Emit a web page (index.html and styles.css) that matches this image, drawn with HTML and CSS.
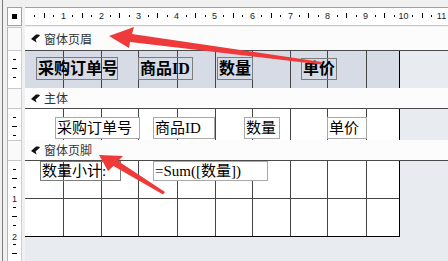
FILE: index.html
```html
<!DOCTYPE html>
<html lang="zh-CN">
<head>
<meta charset="utf-8">
<title>窗体设计视图</title>
<link rel="stylesheet" href="styles.css">
</head>
<body>
<div class="app">
  <div class="corner-cell"><div class="corner"><span class="corner-sq"></span></div></div>
  <div class="hruler-cell">
    <div class="hruler">
      <svg class="rsvg" width="423" height="17" viewBox="0 0 423 17">
        <g class="tk">
          <rect x="9" y="7" width="1" height="2"/><rect x="19" y="5" width="1" height="5"/><rect x="28" y="7" width="1" height="2"/>
          <rect x="47" y="7" width="1" height="2"/><rect x="57" y="5" width="1" height="5"/><rect x="66" y="7" width="1" height="2"/>
          <rect x="85" y="7" width="1" height="2"/><rect x="94" y="5" width="1" height="5"/><rect x="104" y="7" width="1" height="2"/>
          <rect x="123" y="7" width="1" height="2"/><rect x="132" y="5" width="1" height="5"/><rect x="142" y="7" width="1" height="2"/>
          <rect x="161" y="7" width="1" height="2"/><rect x="170" y="5" width="1" height="5"/><rect x="180" y="7" width="1" height="2"/>
          <rect x="198" y="7" width="1" height="2"/><rect x="208" y="5" width="1" height="5"/><rect x="217" y="7" width="1" height="2"/>
          <rect x="236" y="7" width="1" height="2"/><rect x="246" y="5" width="1" height="5"/><rect x="255" y="7" width="1" height="2"/>
          <rect x="274" y="7" width="1" height="2"/><rect x="283" y="5" width="1" height="5"/><rect x="293" y="7" width="1" height="2"/>
          <rect x="312" y="7" width="1" height="2"/><rect x="321" y="5" width="1" height="5"/><rect x="331" y="7" width="1" height="2"/>
          <rect x="350" y="7" width="1" height="2"/><rect x="359" y="5" width="1" height="5"/><rect x="369" y="7" width="1" height="2"/>
          <rect x="387" y="7" width="1" height="2"/><rect x="397" y="5" width="1" height="5"/><rect x="406" y="7" width="1" height="2"/>
        </g>
        <g class="num">
          <text x="38.5" y="11">1</text><text x="76.5" y="11">2</text><text x="113.5" y="11">3</text>
          <text x="151.5" y="11">4</text><text x="189.5" y="11">5</text><text x="227.5" y="11">6</text>
          <text x="265.5" y="11">7</text><text x="302.5" y="11">8</text><text x="340.5" y="11">9</text>
          <text x="378.5" y="11">10</text><text x="416.5" y="11">11</text>
        </g>
      </svg>
    </div>
  </div>

  <div class="vruler-col">
    <div class="vruler">
      <div class="vbox vbox-h"></div>
      <div class="vseg vseg-h">
        <svg class="rsvg" width="13" height="37" viewBox="0 0 13 37"><g class="tk">
          <rect x="5" y="8" width="3" height="1"/><rect x="4" y="17" width="5" height="1"/><rect x="5" y="26" width="3" height="1"/>
        </g></svg>
      </div>
      <div class="vbox vbox-b"></div>
      <div class="vseg vseg-b">
        <svg class="rsvg" width="13" height="31" viewBox="0 0 13 31"><g class="tk">
          <rect x="5" y="8" width="3" height="1"/><rect x="4" y="17" width="5" height="1"/><rect x="5" y="26" width="3" height="1"/>
        </g></svg>
      </div>
      <div class="vbox vbox-f"></div>
      <div class="vseg vseg-f">
        <svg class="rsvg" width="13" height="100" viewBox="0 0 13 100"><g class="tk">
          <rect x="5" y="8" width="3" height="1"/><rect x="4" y="17" width="5" height="1"/><rect x="5" y="26" width="3" height="1"/>
          <rect x="5" y="46" width="3" height="1"/><rect x="4" y="55" width="5" height="1"/><rect x="5" y="64" width="3" height="1"/>
          <rect x="5" y="83" width="3" height="1"/><rect x="4" y="92" width="5" height="1"/>
        </g>
        <g class="num"><text x="6.5" y="40.5">1</text><text x="6.5" y="78.5">2</text></g>
        </svg>
      </div>
    </div>
  </div>

  <div class="design">
    <div class="bar bar-h">
      <svg class="bar-ico" width="9" height="9" viewBox="0 0 9 9"><path d="M0 5 L5 0.6 Q8.6 0 9 1.6 L4.6 5.4 L5.6 8.6 Z"/></svg>
      <span>窗体页眉</span>
    </div>
    <div class="sec sec-h">
      <div class="form">
        <svg class="grid" width="374" height="37" viewBox="0 0 374 37">
          <rect x="38" y="0" width="1" height="37"/><rect x="76" y="0" width="1" height="37"/><rect x="113" y="0" width="1" height="37"/>
          <rect x="152" y="0" width="1" height="37"/><rect x="190" y="0" width="1" height="37"/><rect x="227" y="0" width="1" height="37"/>
          <rect x="265" y="0" width="1" height="37"/><rect x="302" y="0" width="1" height="37"/><rect x="341" y="0" width="1" height="37"/>
        </svg>
        <div class="ctl lbl hdr h1">采购订单号</div>
        <div class="ctl lbl hdr h2">商品ID</div>
        <div class="ctl lbl hdr h3">数量</div>
        <div class="ctl lbl hdr h4">单价</div>
      </div>
      <div class="outside"></div>
    </div>

    <div class="bar bar-b">
      <svg class="bar-ico" width="9" height="9" viewBox="0 0 9 9"><path d="M0 5 L5 0.6 Q8.6 0 9 1.6 L4.6 5.4 L5.6 8.6 Z"/></svg>
      <span>主体</span>
    </div>
    <div class="sec sec-b">
      <div class="form">
        <svg class="grid" width="374" height="31" viewBox="0 0 374 31">
          <rect x="38" y="0" width="1" height="31"/><rect x="76" y="0" width="1" height="31"/><rect x="113" y="0" width="1" height="31"/>
          <rect x="152" y="0" width="1" height="31"/><rect x="190" y="0" width="1" height="31"/><rect x="227" y="0" width="1" height="31"/>
          <rect x="265" y="0" width="1" height="31"/><rect x="302" y="0" width="1" height="31"/><rect x="341" y="0" width="1" height="31"/>
        </svg>
        <div class="ctl txt reg b1">采购订单号</div>
        <div class="ctl txt reg b2">商品ID</div>
        <div class="ctl txt reg b3">数量</div>
        <div class="ctl txt reg b4">单价</div>
      </div>
      <div class="outside"></div>
    </div>

    <div class="bar bar-f">
      <svg class="bar-ico" width="9" height="9" viewBox="0 0 9 9"><path d="M0 5 L5 0.6 Q8.6 0 9 1.6 L4.6 5.4 L5.6 8.6 Z"/></svg>
      <span>窗体页脚</span>
    </div>
    <div class="sec sec-f">
      <div class="form">
        <svg class="grid" width="374" height="75" viewBox="0 0 374 75">
          <rect x="38" y="0" width="1" height="75"/><rect x="76" y="0" width="1" height="75"/><rect x="113" y="0" width="1" height="75"/>
          <rect x="152" y="0" width="1" height="75"/><rect x="190" y="0" width="1" height="75"/><rect x="227" y="0" width="1" height="75"/>
          <rect x="265" y="0" width="1" height="75"/><rect x="302" y="0" width="1" height="75"/><rect x="341" y="0" width="1" height="75"/>
          <rect x="0" y="37" width="374" height="1"/>
        </svg>
        <div class="ctl lbl reg f1">数量小计:</div>
        <div class="ctl txt reg f2">=Sum([数量])</div>
      </div>
      <div class="outside"></div>
    </div>
    <div class="rest"></div>
  </div>
</div>

<svg class="arrows" width="448" height="261" viewBox="0 0 448 261">
  <polygon points="109,36 134,27 132,34 322,62 321,64.5 130,42 129,48"/>
  <polygon points="99,155 123,156 118,161 165,192 163,194.5 113.5,166 108,171"/>
</svg>
</body>
</html>
```

FILE: styles.css
```css
* { box-sizing: border-box; }
html, body { margin: 0; padding: 0; }
body {
  width: 448px;
  height: 261px;
  overflow: hidden;
  position: relative;
  background: #f0f0f0;
  font-family: "Noto Sans CJK SC", sans-serif;
}
.app {
  margin-left: 2px;
  border-left: 1px solid #7a7a7a;
  height: 261px;
  display: grid;
  grid-template-columns: 22px 423px;
  grid-template-rows: 27px 234px;
}
.corner-cell { padding: 7px 0 0 4px; }
.corner {
  width: 15px;
  height: 19px;
  border: 1px solid #a0a0a0;
  background: #fff;
  display: flex;
  align-items: center;
  justify-content: center;
}
.corner-sq { width: 5px; height: 5px; background: #000; }
.hruler-cell { padding-top: 7px; }
.hruler {
  height: 19px;
  border-top: 1px solid #a0a0a0;
  border-bottom: 1px solid #c8c8c8;
  background: #fff;
}
.rsvg { display: block; }
.tk { fill: #000; }
.num {
  fill: #222;
  font-family: "Liberation Sans", sans-serif;
  font-size: 9px;
  text-anchor: middle;
}
.vruler-col { padding-left: 4px; display: flex; }
.vruler {
  width: 15px;
  border-left: 1px solid #b4b4b4;
  border-right: 1px solid #d0d0d0;
  background: #fff;
  display: flex;
  flex-direction: column;
}
.vbox {
  border-top: 1px solid #c8c8c8;
  border-bottom: 1px solid #c8c8c8;
  background: #fafafa;
}
.vbox-h { height: 24px; }
.vbox-b, .vbox-f { height: 21px; }
.vseg-h { height: 37px; }
.vseg-b { height: 31px; }
.vseg-f { flex: 1; }

.design { display: flex; flex-direction: column; }
.bar {
  display: flex;
  align-items: center;
  gap: 4px;
  padding-left: 6px;
  background: #fcfcfc;
  border-bottom: 1px solid #4a4a4a;
  color: #333;
  font-size: 12px;
  line-height: 1;
}
.bar-ico { display: block; fill: #111; }
.bar-h { height: 24px; }
.bar-b, .bar-f { height: 21px; }
.sec { display: flex; }
.sec-h { height: 37px; }
.sec-b { height: 31px; }
.sec-f { height: 76px; }
.form {
  position: relative;
  width: 375px;
  border-right: 1px solid #000;
  background: #fff;
}
.sec-h .form { background: #d6dbe5; }
.sec-f .form { border-bottom: 1px solid #000; }
.grid { display: block; fill: #454545; }
.outside { flex: 1; background: #e8ebf0; }
.rest { flex: 1; background: #e8ebf0; }

.ctl {
  position: absolute;
  display: flex;
  align-items: center;
  padding-left: 1px;
  white-space: nowrap;
  color: #000;
  line-height: 1;
  font-family: "Liberation Serif", "Noto Sans CJK SC", serif;
}
.lbl { border: 1px solid #7c7c7c; }
.txt { border: 1px solid #a9a9a9; background: #fff; }
.hdr { font-size: 16px; font-weight: bold; }
.reg { font-size: 15px; }

.h1 { left: 11px; top: 6px; width: 82px; height: 23px; }
.h2 { left: 113px; top: 6px; width: 55px; height: 23px; }
.h3 { left: 192px; top: 6px; width: 36px; height: 23px; }
.h4 { left: 276px; top: 7px; width: 36px; height: 22px; }

.b1 { left: 30px; top: 8px; width: 85px; height: 22px; }
.b2 { left: 128px; top: 8px; width: 62px; height: 22px; }
.b3 { left: 219px; top: 8px; width: 36px; height: 22px; }
.b4 { left: 302px; top: 8px; width: 40px; height: 22px; }

.f1 { left: 15px; top: 0; width: 81px; height: 20px; }
.f2 { left: 128px; top: 0; width: 115px; height: 20px; }

.arrows {
  position: absolute;
  left: 0;
  top: 0;
  pointer-events: none;
  fill: #ee3a3a;
}
```
